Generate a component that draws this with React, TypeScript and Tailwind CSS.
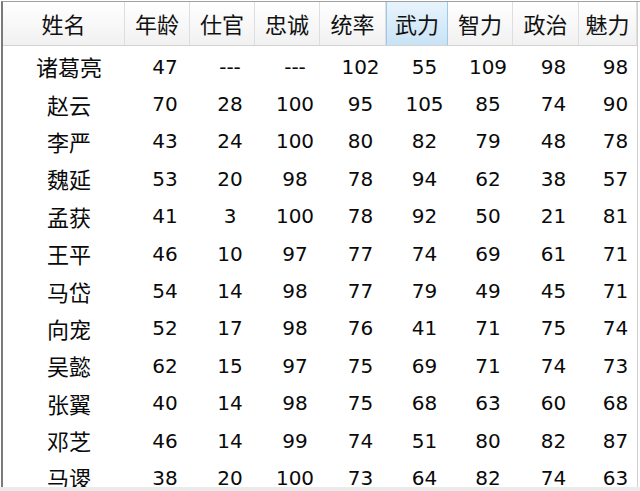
import React from 'react';

const headers = ['姓名', '年龄', '仕官', '忠诚', '统率', '武力', '智力', '政治', '魅力'];

const rows: [string, ...string[]][] = [
  ['诸葛亮', '47', '---', '---', '102', '55', '109', '98', '98'],
  ['赵云', '70', '28', '100', '95', '105', '85', '74', '90'],
  ['李严', '43', '24', '100', '80', '82', '79', '48', '78'],
  ['魏延', '53', '20', '98', '78', '94', '62', '38', '57'],
  ['孟获', '41', '3', '100', '78', '92', '50', '21', '81'],
  ['王平', '46', '10', '97', '77', '74', '69', '61', '71'],
  ['马岱', '54', '14', '98', '77', '79', '49', '45', '71'],
  ['向宠', '52', '17', '98', '76', '41', '71', '75', '74'],
  ['吴懿', '62', '15', '97', '75', '69', '71', '74', '73'],
  ['张翼', '40', '14', '98', '75', '68', '63', '60', '68'],
  ['邓芝', '46', '14', '99', '74', '51', '80', '82', '87'],
  ['马谡', '38', '20', '100', '73', '64', '82', '74', '63'],
];

// 列宽跟截图里的表头分隔线对齐
const cols = 'grid grid-cols-[122px_65px_65px_65px_66px_62px_65px_66px_58px]';

const cjk = { fontFamily: '"Noto Sans CJK SC", sans-serif' };
const num = { fontFamily: '"DejaVu Sans", sans-serif' };

export default function App() {
  return (
    <div className="relative w-[640px] h-[491px] overflow-hidden bg-white">
      <div className="mt-[1px] ml-[1px] h-[490px] border-t border-l-2 border-[#7a7a7a] border-t-[#a0a0a0]">
        <div className="w-[635px] border-r border-[#d0d0d0] h-full">
          {/* 表头 */}
          <div className={`${cols} h-[44px] border-b border-[#d2d2d2]`}>
            {headers.map((h, i) => (
              <div
                key={h}
                style={cjk}
                className={
                  i === 5
                    ? 'flex items-center justify-center pb-[1px] text-[22px] text-[#111] bg-gradient-to-b from-[#e8f4fc] to-[#c8e3f5] border-x border-[#9ccae8]'
                    : 'flex items-center justify-center pb-[1px] text-[22px] text-[#111] bg-gradient-to-b from-white to-[#f1f1f1] border-r border-[#dedede]'
                }
              >
                {h}
              </div>
            ))}
          </div>

          {/* 数据行 */}
          <div className="pt-[2px]">
            {rows.map((r) => (
              <div key={r[0]} className={`${cols} h-[37.4px]`}>
                <div style={cjk} className="flex items-center justify-center pl-[10px] text-[22px] text-[#0a0a0a]">
                  {r[0]}
                </div>
                {r.slice(1).map((v, j) => (
                  <div key={j} style={num} className="flex items-center justify-center pl-[15px] text-[20px] text-[#0a0a0a]">
                    {v}
                  </div>
                ))}
              </div>
            ))}
          </div>
        </div>
      </div>
      <div className="absolute bottom-0 left-0 right-0 h-[4px] bg-[#ebebeb]" />
    </div>
  );
}
